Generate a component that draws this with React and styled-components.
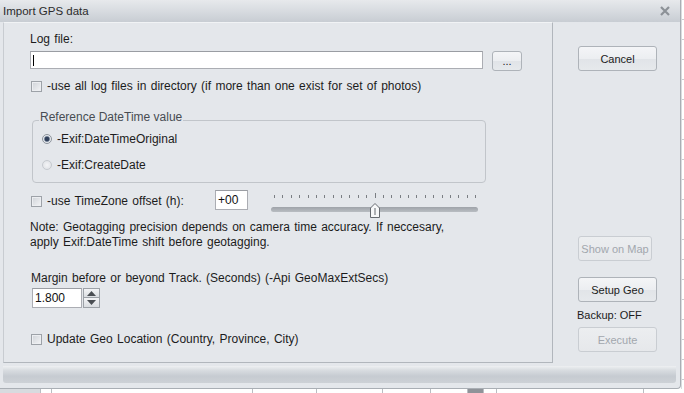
import React from 'react';
import styled, { createGlobalStyle } from 'styled-components';

const GlobalStyle = createGlobalStyle`
    html, body {
        margin: 0;
        padding: 0;
    }
    body {
        width: 684px;
        height: 393px;
        overflow: hidden;
        background: #ffffff;
        font-family: "Liberation Sans", Arial, sans-serif;
        font-size: 12px;
        color: #1c1c1c;
    }
`;

const Screen = styled.div`
    width: 684px;
    height: 393px;
    display: flex;
    flex-direction: column;
    overflow: hidden;
`;

const TopRow = styled.div`
    display: flex;
    height: 389px;
    flex: none;
`;

const Window = styled.div`
    width: 681px;
    box-sizing: border-box;
    display: flex;
    flex-direction: column;
    background: #e4e7eb;
    border-right: 1px solid #a9aeb4;
    border-bottom: 1px solid #a9aeb4;
    border-bottom-right-radius: 4px;
`;

const TitleBar = styled.div`
    height: 22px;
    flex: none;
    display: flex;
    align-items: center;
    justify-content: space-between;
    padding: 0 10px 0 3px;
    background: linear-gradient(#e7e9ec, #d6dadf 55%, #c8cdd3);
    color: #2b2b2b;
    font-size: 11.5px;
`;

const Body = styled.div`
    display: flex;
    height: 341px;
    flex: none;
`;

const Panel = styled.div`
    width: 550px;
    margin-left: 3px;
    box-sizing: border-box;
    border-left: 1px solid #c8ccd1;
    border-top: 1px solid #f1f3f5;
    border-right: 1px solid #b1b6bc;
    border-bottom: 1px solid #b1b6bc;
    padding-left: 26px;
    display: flex;
    flex-direction: column;
    align-items: flex-start;
    word-spacing: 1px;
`;

const Text = styled.div`
    line-height: ${p => p.$lh || 14}px;
    margin-top: ${p => p.$mt || 0}px;
    margin-left: ${p => p.$ml || 0}px;
    white-space: nowrap;
`;

const InputRow = styled.div`
    display: flex;
    align-items: flex-start;
    margin-top: 5px;
`;

const TextInput = styled.div`
    width: ${p => p.$w}px;
    height: ${p => p.$h || 18}px;
    margin-top: ${p => p.$mt || 0}px;
    box-sizing: border-box;
    background: #ffffff;
    border: 1px solid #abadb3;
    border-top-color: #9a9da3;
    padding-left: ${p => p.$pl || 1}px;
    line-height: ${p => (p.$h || 18) - 2}px;
    display: flex;
    align-items: center;
    color: #111;
`;

const Caret = styled.span`
    width: 1px;
    height: 11px;
    background: #000;
`;

const Button = styled.div`
    width: ${p => p.$w}px;
    height: ${p => p.$h || 25}px;
    margin-top: ${p => p.$mt || 0}px;
    margin-left: ${p => p.$ml || 0}px;
    box-sizing: border-box;
    display: flex;
    align-items: center;
    justify-content: center;
    border-radius: 3px;
    font-size: 11px;
    word-spacing: 0;
    border: 1px solid ${p => (p.$disabled ? '#c9cdd2' : '#aeb3b9')};
    color: ${p => (p.$disabled ? '#a2a7ad' : '#1b1b1b')};
    background: ${p => (p.$disabled
        ? 'linear-gradient(#eceef0, #e6e8eb)'
        : 'linear-gradient(#f4f5f7, #eceef1 50%, #e1e4e8 51%, #e6e9ec)')};
`;

const CheckRow = styled.label`
    display: flex;
    align-items: center;
    gap: 5px;
    height: 14px;
    line-height: 14px;
    width: ${p => (p.$w ? `${p.$w}px` : 'auto')};
    margin-top: ${p => p.$mt || 0}px;
    margin-left: 1px;
    white-space: nowrap;
`;

const Box = styled.span`
    width: 11px;
    height: 11px;
    flex: none;
    box-sizing: border-box;
    border: 1px solid #9da2a8;
    background: linear-gradient(135deg, #cfd3d8, #f3f4f6);
    box-shadow: inset 0 0 0 1px #eceef1;
`;

const Group = styled.fieldset`
    margin: 17px 0 0 2px;
    width: 454px;
    box-sizing: border-box;
    padding: 2px 10px 10px 6px;
    border: 1px solid #c1c5ca;
    border-radius: 4px;
    display: flex;
    flex-direction: column;
    gap: 12px;
    word-spacing: 0;
`;

const Legend = styled.legend`
    padding: 0 1px 6px;
    line-height: 14px;
    color: #474c52;
`;

const RadioRow = styled.label`
    display: flex;
    align-items: center;
    gap: 5px;
    height: 14px;
    padding-left: 3px;
    white-space: nowrap;
`;

const RadioDot = styled.span`
    width: 10px;
    height: 10px;
    flex: none;
    box-sizing: border-box;
    border-radius: 50%;
    border: 1px solid ${p => (p.$checked ? '#8d949c' : '#c6cacf')};
    background: ${p => (p.$checked
        ? 'radial-gradient(circle, #31405a 0 2px, #8391a3 2.6px, #e6e9ed 3.4px)'
        : 'radial-gradient(circle, #f3f4f6, #dcdfe3)')};
`;

const TzRow = styled.div`
    display: flex;
    align-items: flex-start;
    margin-top: 6px;
`;

const Slider = styled.div`
    position: relative;
    width: 207px;
    height: 30px;
    margin-left: 23px;
`;

const Ticks = styled.div`
    display: flex;
    justify-content: space-between;
    align-items: flex-end;
    height: 6px;
    padding: 3px 2px 0 3px;
`;

const Tick = styled.span`
    width: 1px;
    height: ${p => (p.$major ? 5 : 3)}px;
    background: #7a7e83;
`;

const Track = styled.div`
    margin-top: 9px;
    height: 5px;
    border-radius: 3px;
    background: linear-gradient(#9ea3a9, #b9bdc2);
`;

const Thumb = styled.svg`
    position: absolute;
    top: 14px;
    left: ${p => p.$left}px;
`;

const Spin = styled.div`
    display: flex;
    height: 20px;
    margin: 3px 0 0 2px;
`;

const SpinButtons = styled.div`
    display: flex;
    flex-direction: column;
    width: 17px;
    margin-left: 1px;
`;

const SpinButton = styled.div`
    height: 10px;
    box-sizing: border-box;
    border: 1px solid #9ca1a7;
    ${p => (p.$down ? 'border-top: none;' : '')}
    background: linear-gradient(#f3f4f6, #dadde1);
    display: flex;
    align-items: center;
    justify-content: center;
`;

const Side = styled.div`
    flex: 1;
    padding: 24px 0 0 25px;
    display: flex;
    flex-direction: column;
    align-items: flex-start;
`;

const SideLabel = styled.div`
    font-size: 11px;
    line-height: 14px;
    margin: 6px 0 0 -1px;
    color: #1b1b1b;
`;

const StatusBar = styled.div`
    height: 17px;
    flex: none;
    margin: 3px 4px 0 3px;
    border-radius: 0 0 3px 3px;
    background: linear-gradient(#eef0f2, #d8dce0 25%, #c6cbd1 60%, #cdd1d6);
`;

const EdgeStrip = styled.div`
    flex: 1;
    background: repeating-linear-gradient(#ffffff 0 19px, #c9ccd0 19px 20px);
    border-left: 1px solid #d9dcdf;
`;

const BottomStrip = styled.div`
    flex: 1;
    display: flex;
    background: #ffffff;
`;

const Cell = styled.div`
    width: ${p => p.$w}px;
    flex: none;
    border-right: 1px solid #b9bdc2;
    background: ${p => p.$bg || 'transparent'};
`;

const Close = () => (
    <svg width="10" height="10" viewBox="0 0 10 10">
        <path d="M1 1 L9 9 M9 1 L1 9" stroke="#8c9197" strokeWidth="2.2" fill="none" />
    </svg>
);

const Arrow = ({ down }) => (
    <svg width="9" height="5" viewBox="0 0 9 5">
        <polygon points={down ? '0,0 9,0 4.5,5' : '0,5 9,5 4.5,0'} fill="#4a4e53" />
    </svg>
);

const TICKS = Array.from({ length: 25 }, (_, i) => i);

export default function App() {
    const offset = 0;
    return (
        <Screen>
            <GlobalStyle />
            <TopRow>
                <Window>
                    <TitleBar>
                        <span>Import GPS data</span>
                        <Close />
                    </TitleBar>
                    <Body>
                        <Panel>
                            <Text $mt={9}>Log file:</Text>
                            <InputRow>
                                <TextInput $w={453} $pl={2}>
                                    <Caret />
                                </TextInput>
                                <Button $w={30} $h={20} $ml={9}>...</Button>
                            </InputRow>
                            <CheckRow $mt={8}>
                                <Box />
                                -use all log files in directory (if more than one exist for set of photos)
                            </CheckRow>
                            <Group>
                                <Legend>Reference DateTime value</Legend>
                                <RadioRow>
                                    <RadioDot $checked />
                                    -Exif:DateTimeOriginal
                                </RadioRow>
                                <RadioRow>
                                    <RadioDot />
                                    -Exif:CreateDate
                                </RadioRow>
                            </Group>
                            <TzRow>
                                <CheckRow $w={184} $mt={5}>
                                    <Box />
                                    -use TimeZone offset (h):
                                </CheckRow>
                                <TextInput $w={33} $h={20} $mt={1} $pl={2}>+00</TextInput>
                                <Slider>
                                    <Ticks>
                                        {TICKS.map(i => <Tick key={i} $major={i === 12} />)}
                                    </Ticks>
                                    <Track />
                                    <Thumb $left={99 + offset * 8.4} width="10" height="15" viewBox="0 0 10 15">
                                        <polygon points="0.5,14.5 0.5,5 5,0.5 9.5,5 9.5,14.5" fill="#f7f8f9" stroke="#666a70" />
                                        <line x1="5" y1="5" x2="5" y2="12" stroke="#666a70" />
                                    </Thumb>
                                </Slider>
                            </TzRow>
                            <Text $lh={15} $mt={1}>
                                Note: Geotagging precision depends on camera time accuracy. If neccesary,
                                <br />
                                apply Exif:DateTime shift before geotagging.
                            </Text>
                            <Text $mt={21} $ml={1}>Margin before or beyond Track. (Seconds) (-Api GeoMaxExtSecs)</Text>
                            <Spin>
                                <TextInput $w={50} $h={20} $pl={2}>1.800</TextInput>
                                <SpinButtons>
                                    <SpinButton><Arrow /></SpinButton>
                                    <SpinButton $down><Arrow down /></SpinButton>
                                </SpinButtons>
                            </Spin>
                            <CheckRow $mt={24}>
                                <Box />
                                Update Geo Location (Country, Province, City)
                            </CheckRow>
                        </Panel>
                        <Side>
                            <Button $w={79}>Cancel</Button>
                            <Button $w={74} $mt={165} $disabled>Show on Map</Button>
                            <Button $w={79} $mt={16}>Setup Geo</Button>
                            <SideLabel>Backup: OFF</SideLabel>
                            <Button $w={79} $mt={5} $disabled>Execute</Button>
                        </Side>
                    </Body>
                    <StatusBar />
                </Window>
                <EdgeStrip />
            </TopRow>
            <BottomStrip>
                <Cell $w={40} $bg="#d8dbdf" />
                <Cell $w={10} />
                <Cell $w={200} />
                <Cell $w={63} />
                <Cell $w={65} />
                <Cell $w={47} />
                <Cell $w={36} />
                <Cell $w={15} $bg="#8f9399" />
                <Cell $w={12} />
                <Cell $w={146} />
            </BottomStrip>
        </Screen>
    );
}
